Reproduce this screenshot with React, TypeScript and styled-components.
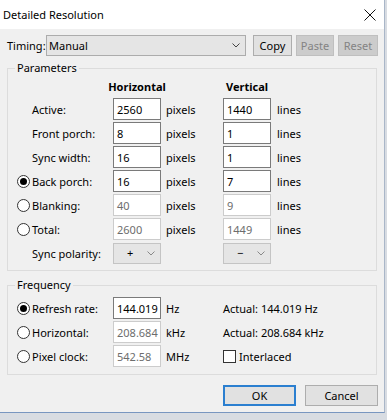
import React from "react";
import styled, { createGlobalStyle } from "styled-components";

const GlobalStyle = createGlobalStyle`
  html, body { margin: 0; padding: 0; background: #d8dce2; }
  body {
    font-family: "Segoe UI", "Noto Sans", sans-serif;
    font-size: 11px;
    color: #000;
  }
  * { box-sizing: border-box; }
`;

const Window = styled.div`
  width: 385px;
  height: 413px;
  background: #f0f0f0;
  border-right: 1px solid #a9b6c8;
  border-bottom: 1px solid #7896c0;
  display: flex;
  flex-direction: column;
`;

const TitleBar = styled.div`
  height: 29px;
  flex: none;
  background: #fff;
  display: flex;
  align-items: center;
  justify-content: space-between;
  padding: 0 8px 0 3px;
`;

const Title = styled.span`
  font-size: 11px;
  line-height: 16px;
`;

const Body = styled.div`
  padding: 6px 0 0 7px;
  display: flex;
  flex-direction: column;
`;

const TimingRow = styled.div`
  display: flex;
  align-items: center;
  height: 21px;
`;

const TimingLabel = styled.span`
  width: 39px;
  flex: none;
  white-space: nowrap;
`;

const Combo = styled.div<{ $width: number; $disabled?: boolean; $lead?: number }>`
  width: ${(p) => p.$width}px;
  height: 21px;
  flex: none;
  display: flex;
  align-items: center;
  justify-content: space-between;
  padding: 0 5px 0 ${(p) => p.$lead ?? 2}px;
  background: #e5e5e5;
  border: 1px solid ${(p) => (p.$disabled ? "#c4c4c4" : "#acacac")};
  line-height: 16px;
`;

const Button = styled.div<{ $width: number; $disabled?: boolean; $default?: boolean; $gap?: number }>`
  width: ${(p) => p.$width}px;
  height: 21px;
  flex: none;
  margin-left: ${(p) => p.$gap ?? 0}px;
  display: flex;
  align-items: center;
  justify-content: center;
  background: ${(p) => (p.$disabled ? "#cccccc" : "#e1e1e1")};
  color: ${(p) => (p.$disabled ? "#838383" : "#000")};
  border: ${(p) => (p.$default ? "2px solid #2b7fd0" : p.$disabled ? "1px solid #bfbfbf" : "1px solid #adadad")};
`;

const Group = styled.fieldset<{ $top: number; $bottom: number }>`
  margin: ${(p) => p.$top}px 0 0 0;
  padding: 0 0 ${(p) => p.$bottom}px 0;
  width: 370px;
  min-width: 0;
  border: 1px solid #dcdcdc;
`;

const Legend = styled.legend`
  margin-left: 7px;
  padding: 0 2px;
  line-height: 16px;
  font-size: 11px;
`;

const Grid = styled.div<{ $padTop?: number; $header?: boolean }>`
  display: grid;
  grid-template-columns: 105px 48px 62px 48px 1fr;
  grid-template-rows: ${(p) => (p.$header ? "20px" : "none")};
  grid-auto-rows: 22px;
  row-gap: 2px;
  padding-top: ${(p) => p.$padTop ?? 0}px;
`;

const HeaderCell = styled.div<{ $col: number }>`
  grid-column: ${(p) => p.$col};
  display: flex;
  align-items: center;
  justify-content: center;
  white-space: nowrap;
  font-weight: bold;
`;

const LabelCell = styled.div<{ $radio?: boolean }>`
  grid-column: 1;
  display: flex;
  align-items: center;
  gap: 2px;
  padding-left: ${(p) => (p.$radio ? 9 : 24)}px;
  white-space: nowrap;
`;

const RadioCircle = styled.span<{ $on?: boolean }>`
  width: 13px;
  height: 13px;
  flex: none;
  border-radius: 50%;
  border: 1px solid #333;
  background: #fff;
  display: flex;
  align-items: center;
  justify-content: center;
  &::after {
    content: "";
    width: 7px;
    height: 7px;
    border-radius: 50%;
    background: #000;
    display: ${(p) => (p.$on ? "block" : "none")};
  }
`;

const Field = styled.div<{ $disabled?: boolean; $col: number }>`
  grid-column: ${(p) => p.$col};
  height: 22px;
  display: flex;
  align-items: center;
  padding-left: 3px;
  background: #fff;
  border: 1px solid ${(p) => (p.$disabled ? "#cccccc" : "#7a7a7a")};
  color: ${(p) => (p.$disabled ? "#6d6d6d" : "#000")};
  white-space: nowrap;
`;

const UnitCell = styled.div<{ $col: number; $pad: number; $span?: number }>`
  grid-column: ${(p) => p.$col} / span ${(p) => p.$span ?? 1};
  display: flex;
  align-items: center;
  gap: 3px;
  padding-left: ${(p) => p.$pad}px;
  white-space: nowrap;
`;

const ComboCell = styled.div<{ $col: number }>`
  grid-column: ${(p) => p.$col};
  display: flex;
  align-items: center;
`;

const CheckBox = styled.span`
  width: 13px;
  height: 13px;
  flex: none;
  border: 1px solid #333;
  background: #fff;
`;

const Footer = styled.div`
  width: 371px;
  margin-top: 10px;
  display: flex;
  justify-content: flex-end;
`;

const Chevron = ({ color = "#444" }: { color?: string }) => (
  <svg width="8" height="5" viewBox="0 0 8 5">
    <path d="M0.5 0.5 L4 4 L7.5 0.5" fill="none" stroke={color} strokeWidth="1" />
  </svg>
);

const CloseX = () => (
  <svg width="12" height="12" viewBox="0 0 12 12">
    <path d="M0.5 0.5 L11.5 11.5 M11.5 0.5 L0.5 11.5" stroke="#111" strokeWidth="1" fill="none" />
  </svg>
);

type Row = {
  label: string;
  radio?: boolean;
  on?: boolean;
  h: string;
  v: string;
  disabled?: boolean;
};

const rows: Row[] = [
  { label: "Active:", h: "2560", v: "1440" },
  { label: "Front porch:", h: "8", v: "1" },
  { label: "Sync width:", h: "16", v: "1" },
  { label: "Back porch:", radio: true, on: true, h: "16", v: "7" },
  { label: "Blanking:", radio: true, h: "40", v: "9", disabled: true },
  { label: "Total:", radio: true, h: "2600", v: "1449", disabled: true },
];

type FreqRow = { label: string; on?: boolean; value: string; unit: string; disabled?: boolean };

const freqRows: FreqRow[] = [
  { label: "Refresh rate:", on: true, value: "144.019", unit: "Hz" },
  { label: "Horizontal:", value: "208.684", unit: "kHz", disabled: true },
  { label: "Pixel clock:", value: "542.58", unit: "MHz", disabled: true },
];

export default function App() {
  return (
    <>
      <GlobalStyle />
      <Window>
        <TitleBar>
          <Title>Detailed Resolution</Title>
          <CloseX />
        </TitleBar>
        <Body>
          <TimingRow>
            <TimingLabel>Timing:</TimingLabel>
            <Combo $width={200}>
              <span>Manual</span>
              <Chevron />
            </Combo>
            <Button $width={39} $gap={7}>Copy</Button>
            <Button $width={38} $gap={4} $disabled>Paste</Button>
            <Button $width={40} $gap={4} $disabled>Reset</Button>
          </TimingRow>

          <Group $top={4} $bottom={6}>
            <Legend>Parameters</Legend>
            <Grid $header>
              <HeaderCell $col={2}>Horizontal</HeaderCell>
              <HeaderCell $col={4}>Vertical</HeaderCell>
              {rows.map((r) => (
                <React.Fragment key={r.label}>
                  <LabelCell $radio={r.radio}>
                    {r.radio && <RadioCircle $on={r.on} />}
                    <span>{r.label}</span>
                  </LabelCell>
                  <Field $col={2} $disabled={r.disabled}>{r.h}</Field>
                  <UnitCell $col={3} $pad={5}>pixels</UnitCell>
                  <Field $col={4} $disabled={r.disabled}>{r.v}</Field>
                  <UnitCell $col={5} $pad={6}>lines</UnitCell>
                </React.Fragment>
              ))}
              <LabelCell>Sync polarity:</LabelCell>
              <ComboCell $col={2}>
                <Combo $width={48} $disabled $lead={13}>
                  <span>+</span>
                  <Chevron color="#888" />
                </Combo>
              </ComboCell>
              <ComboCell $col={4}>
                <Combo $width={48} $disabled $lead={13}>
                  <span>−</span>
                  <Chevron color="#888" />
                </Combo>
              </ComboCell>
            </Grid>
          </Group>

          <Group $top={6} $bottom={7}>
            <Legend>Frequency</Legend>
            <Grid $padTop={4}>
              {freqRows.map((r, i) => (
                <React.Fragment key={r.label}>
                  <LabelCell $radio>
                    <RadioCircle $on={r.on} />
                    <span>{r.label}</span>
                  </LabelCell>
                  <Field $col={2} $disabled={r.disabled}>{r.value}</Field>
                  <UnitCell $col={3} $pad={5}>{r.unit}</UnitCell>
                  {i === 0 && <UnitCell $col={4} $pad={0} $span={2}>Actual: 144.019 Hz</UnitCell>}
                  {i === 1 && <UnitCell $col={4} $pad={0} $span={2}>Actual: 208.684 kHz</UnitCell>}
                  {i === 2 && (
                    <UnitCell $col={4} $pad={0} $span={2}>
                      <CheckBox />
                      <span>Interlaced</span>
                    </UnitCell>
                  )}
                </React.Fragment>
              ))}
            </Grid>
          </Group>

          <Footer>
            <Button $width={73} $default>OK</Button>
            <Button $width={73} $gap={9}>Cancel</Button>
          </Footer>
        </Body>
      </Window>
    </>
  );
}
